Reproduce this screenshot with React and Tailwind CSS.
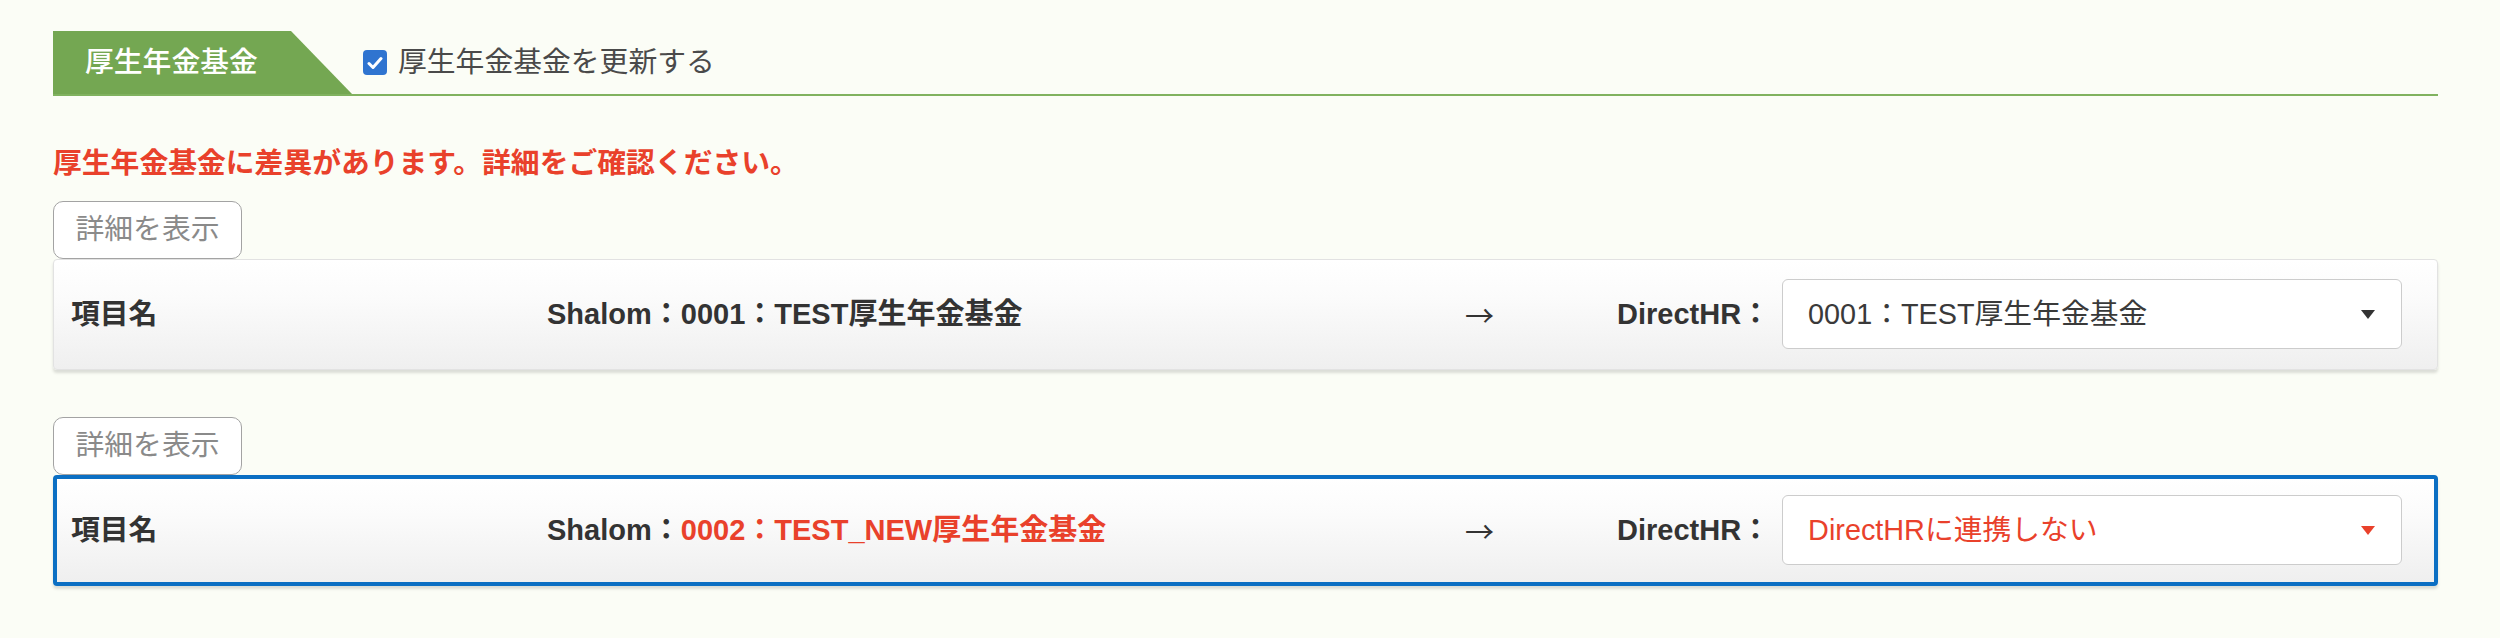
import React from 'react';

const FONT = "font-['Liberation_Sans','Noto_Sans_CJK_JP',sans-serif]";

function Caret({ color }) {
  return (
    <svg width="14" height="9" viewBox="0 0 14 9">
      <polygon points="0,0 14,0 7,9" fill={color} />
    </svg>
  );
}

function DetailButton() {
  return (
    <button className="w-[189px] h-[58px] border border-[#a3a3a3] rounded-[10px] bg-white text-[#8a8a8a] text-[28.8px] leading-none flex items-center justify-center">
      詳細を表示
    </button>
  );
}

// one diff row: item name / Shalom value / arrow / DirectHR select
function DiffRow({ code, name, changed, selectText, selected }) {
  const valueColor = changed ? 'text-[#e9412b]' : 'text-[#333333]';
  return (
    <div
      className={`flex items-center h-[111px] rounded-[4px] bg-[linear-gradient(to_bottom,#ffffff_0%,#fbfbfb_35%,#efefef_100%)] shadow-[0_3px_3px_rgba(0,0,0,0.13)] ${
        selected ? 'border-4 border-[#0b6fc3] pl-[14px]' : 'border border-[#e2e2e2] pl-[17px]'
      }`}
    >
      <div className="w-[476px] font-bold text-[#333333] text-[28.8px]">項目名</div>
      <div className="w-[918px] font-bold text-[29px] text-[#333333] whitespace-nowrap">
        Shalom：<span className={valueColor}>{code}：{name}</span>
      </div>
      <div className="w-[152px] text-[29px] text-[#333333] font-['Noto_Sans_CJK_JP',sans-serif]">→</div>
      <div className="font-bold text-[29px] text-[#333333] whitespace-nowrap">DirectHR：</div>
      <div className="ml-[12px] w-[620px] h-[70px] bg-white border border-[#cccccc] rounded-[6px] flex items-center justify-between pl-[25px] pr-[26px]">
        <span className={`text-[28.8px] whitespace-nowrap ${changed ? 'text-[#e9412b]' : 'text-[#3a3a3a]'}`}>
          {selectText}
        </span>
        <Caret color={changed ? '#e9412b' : '#333333'} />
      </div>
    </div>
  );
}

export default function App() {
  return (
    <div className={`min-h-screen bg-[#fbfdf6] pt-[31px] pl-[53px] pr-[62px] ${FONT}`}>
      {/* Section header */}
      <div className="flex items-center border-b-2 border-[#80b25f]">
        <div className="w-[299px] h-[63px] bg-[#74a752] [clip-path:polygon(0_0,238px_0,100%_100%,0_100%)] flex items-center pl-[32px] text-white text-[28.8px] font-medium">
          厚生年金基金
        </div>
        <label className="ml-[11px] flex items-center gap-[11px] text-[#4a4a4a] text-[28.8px]">
          <span className="w-[24px] h-[25px] rounded-[4px] bg-[#2f74d0] flex items-center justify-center">
            <svg width="16" height="14" viewBox="0 0 16 14">
              <path d="M2 7.5 L6 11.5 L14 2.5" stroke="#ffffff" strokeWidth="3" fill="none" strokeLinecap="round" strokeLinejoin="round" />
            </svg>
          </span>
          厚生年金基金を更新する
        </label>
      </div>

      <p className="mt-[53px] text-[#e9412b] font-bold text-[28.8px] leading-none">
        厚生年金基金に差異があります。詳細をご確認ください。
      </p>

      <div className="mt-[23px]">
        <DetailButton />
        <DiffRow code="0001" name="TEST厚生年金基金" selectText="0001：TEST厚生年金基金" />
      </div>

      <div className="mt-[47px]">
        <DetailButton />
        <DiffRow code="0002" name="TEST_NEW厚生年金基金" changed selected selectText="DirectHRに連携しない" />
      </div>
    </div>
  );
}
